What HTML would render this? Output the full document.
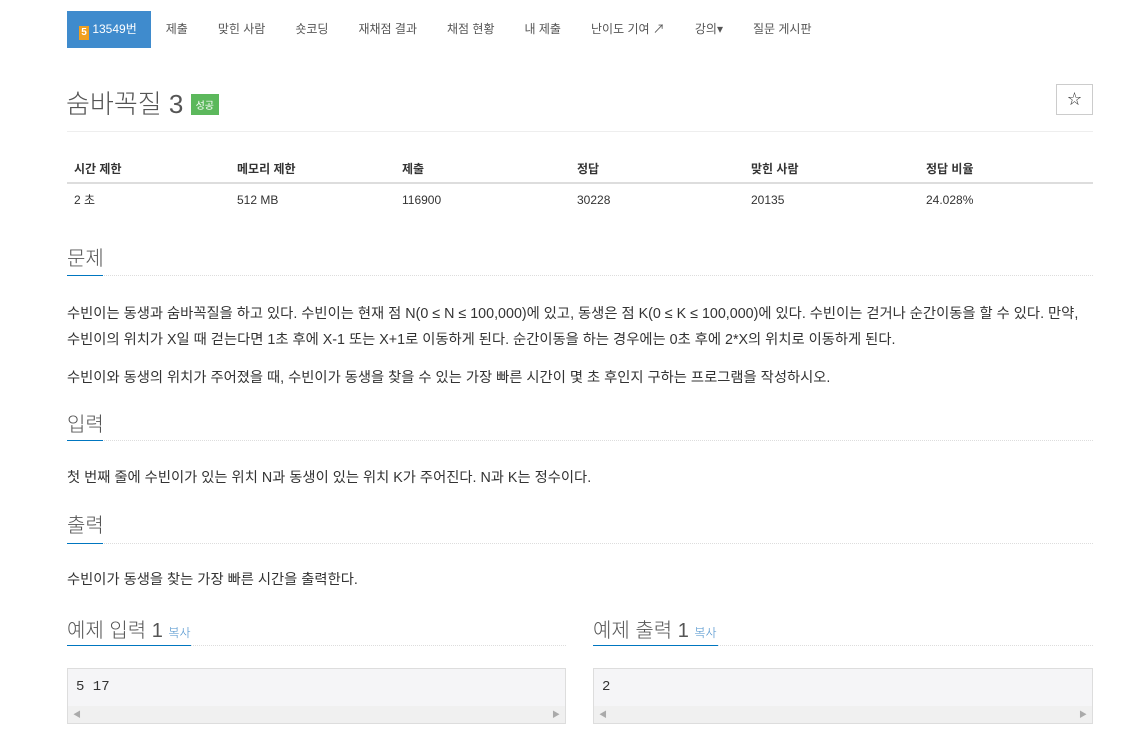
<!DOCTYPE html>
<html><head><meta charset="utf-8"><style>
*{box-sizing:border-box;margin:0;padding:0}
body{width:1147px;height:745px;overflow:hidden;background:#fff;font-family:"Liberation Sans","Noto Sans CJK KR",sans-serif;color:#333;font-size:14px}
.abs{position:absolute;white-space:nowrap}
.nav{position:absolute;top:11px;left:67px;height:37px;display:flex;font-size:12px;color:#555}
.nav div{padding:0 15px;line-height:37px}
.nav .act{background:#3f8bcd;color:#fff;padding:0 14px 0 12px}
.h{font-size:20px;color:#555;font-weight:300}
.ul{position:absolute;height:1px;border-top:1px dotted #ddd}
.bl{position:absolute;height:1px;background:#0076c0;z-index:2}
th,td{text-align:left}
.p{font-size:14.3px;color:#333}
.pre{position:absolute;border:1px solid #ddd;background:#f5f5f7;height:56px}
.pre .t{position:absolute;left:8px;top:10px;font-family:"Liberation Mono",monospace;font-size:14px;color:#333}
.pre .sb{position:absolute;left:0;right:0;bottom:0;height:17px;background:#f0f0f0;font-size:8px;color:#aaa}
</style></head><body>
<div class="nav">
<div class="act"><span style="display:inline-block;background:#f0a020;color:#fff;width:10px;height:14px;font-size:10px;line-height:14px;text-align:center;vertical-align:-2px;font-weight:bold">5</span> 13549번</div>
<div>제출</div><div>맞힌 사람</div><div>숏코딩</div><div>재채점 결과</div><div>채점 현황</div><div>내 제출</div><div>난이도 기여 ↗</div><div>강의▾</div><div>질문 게시판</div>
</div>
<div class="abs" style="left:66px;top:84px;font-size:26px;color:#555;font-weight:300">숨바꼭질 3 <span style="display:inline-block;background:#5cb85c;color:#fff;font-size:10px;padding:3px 5px;vertical-align:4px;font-weight:normal">성공</span></div>
<div class="abs" style="left:1056px;top:84px;width:37px;height:31px;border:1px solid #ccc;text-align:center;line-height:29px;font-size:14px">☆</div>
<div class="abs" style="left:67px;top:131px;width:1026px;height:1px;background:#eee"></div>
<table class="abs" style="left:67px;top:155px;width:1026px;border-collapse:collapse;font-size:12px;table-layout:fixed">
<tr style="height:28px;border-bottom:2px solid #ddd"><th style="padding-left:7px;width:170px">시간 제한</th><th style="width:165px">메모리 제한</th><th style="width:175px">제출</th><th style="width:174px">정답</th><th style="width:175px">맞힌 사람</th><th>정답 비율</th></tr>
<tr style="height:32px"><td style="padding-left:7px">2 초</td><td>512 MB</td><td>116900</td><td>30228</td><td>20135</td><td>24.028%</td></tr>
</table>
<div class="abs h" style="left:67px;top:242px">문제</div>
<div class="ul" style="left:67px;top:275px;width:1026px"></div><div class="bl" style="left:67px;top:275px;width:36px"></div>
<div class="abs p" style="left:67px;top:302px">수빈이는 동생과 숨바꼭질을 하고 있다. 수빈이는 현재 점 N(0 ≤ N ≤ 100,000)에 있고, 동생은 점 K(0 ≤ K ≤ 100,000)에 있다. 수빈이는 걷거나 순간이동을 할 수 있다. 만약,</div>
<div class="abs p" style="left:67px;top:328px">수빈이의 위치가 X일 때 걷는다면 1초 후에 X-1 또는 X+1로 이동하게 된다. 순간이동을 하는 경우에는 0초 후에 2*X의 위치로 이동하게 된다.</div>
<div class="abs p" style="left:67px;top:366px">수빈이와 동생의 위치가 주어졌을 때, 수빈이가 동생을 찾을 수 있는 가장 빠른 시간이 몇 초 후인지 구하는 프로그램을 작성하시오.</div>
<div class="abs h" style="left:67px;top:408px">입력</div>
<div class="ul" style="left:67px;top:440px;width:1026px"></div><div class="bl" style="left:67px;top:440px;width:36px"></div>
<div class="abs p" style="left:67px;top:466px">첫 번째 줄에 수빈이가 있는 위치 N과 동생이 있는 위치 K가 주어진다. N과 K는 정수이다.</div>
<div class="abs h" style="left:67px;top:509px">출력</div>
<div class="ul" style="left:67px;top:543px;width:1026px"></div><div class="bl" style="left:67px;top:543px;width:36px"></div>
<div class="abs p" style="left:67px;top:568px">수빈이가 동생을 찾는 가장 빠른 시간을 출력한다.</div>
<div class="abs h" style="left:67px;top:614px">예제 입력 1 <span style="font-size:12px;color:#428bca">복사</span></div>
<div class="ul" style="left:67px;top:645px;width:499px"></div><div class="bl" style="left:67px;top:645px;width:124px"></div>
<div class="abs h" style="left:593px;top:614px">예제 출력 1 <span style="font-size:12px;color:#428bca">복사</span></div>
<div class="ul" style="left:593px;top:645px;width:500px"></div><div class="bl" style="left:593px;top:645px;width:125px"></div>
<div class="pre" style="left:67px;top:668px;width:499px"><div class="t">5 17</div><div class="sb"><span style="position:absolute;left:5px;top:3px">◀</span><span style="position:absolute;right:5px;top:3px">▶</span></div></div>
<div class="pre" style="left:593px;top:668px;width:500px"><div class="t">2</div><div class="sb"><span style="position:absolute;left:5px;top:3px">◀</span><span style="position:absolute;right:5px;top:3px">▶</span></div></div>
</body></html>
